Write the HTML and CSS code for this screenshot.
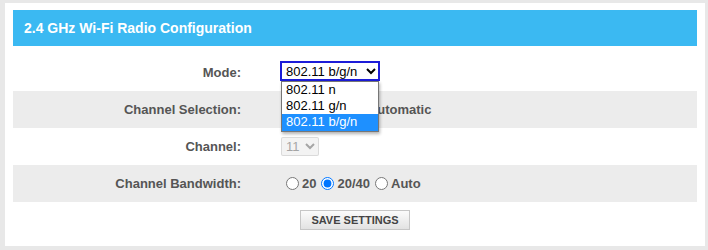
FILE: index.html
```html
<!DOCTYPE html>
<html lang="en">
<head>
  <meta charset="UTF-8" />
  <title>2.4 GHz Wi-Fi Radio Configuration</title>
  <link rel="stylesheet" href="styles.css">
</head>
<body>

  <div class="panel">
    <div class="panel-head">2.4 GHz Wi-Fi Radio Configuration</div>

    <form class="cfg-form">
      <div class="cfg-row">
        <label class="cfg-label" for="mode">Mode:</label>
        <div class="cfg-value">
          <div class="select-wrap">
            <select id="mode" class="mode-select">
              <option>802.11 n</option>
              <option>802.11 g/n</option>
              <option selected>802.11 b/g/n</option>
            </select>
            <ul class="select-popup">
              <li>802.11 n</li>
              <li>802.11 g/n</li>
              <li class="is-active">802.11 b/g/n</li>
            </ul>
          </div>
        </div>
      </div>

      <div class="cfg-row alt">
        <span class="cfg-label">Channel Selection:</span>
        <div class="cfg-value">
          <input type="radio" name="chsel" id="chManual"><label for="chManual">Manual</label><input type="radio" name="chsel" id="chAuto" checked><label for="chAuto">Automatic</label>
        </div>
      </div>

      <div class="cfg-row">
        <label class="cfg-label" for="channel">Channel:</label>
        <div class="cfg-value">
          <select id="channel" class="channel-select" disabled>
            <option>11</option>
          </select>
        </div>
      </div>

      <div class="cfg-row alt">
        <span class="cfg-label">Channel Bandwidth:</span>
        <div class="cfg-value">
          <input type="radio" name="bw" id="bw20"><label for="bw20">20</label><input type="radio" name="bw" id="bw40" checked><label for="bw40">20/40</label><input type="radio" name="bw" id="bwAuto"><label for="bwAuto">Auto</label>
        </div>
      </div>

      <div class="cfg-actions">
        <button type="button" class="save-btn">SAVE SETTINGS</button>
      </div>
    </form>
  </div>

</body>
</html>
```

FILE: styles.css
```css
html, body {
  margin: 0;
  padding: 0;
  background: #e8e8e8;
  font-family: "Liberation Sans", Arial, sans-serif;
}

.panel {
  margin: 3px 3px 0 5px;
  padding: 7px 8px 8px;
  background: #fff;
  height: 228px;
}

.panel-head {
  height: 36px;
  line-height: 36px;
  padding-left: 11px;
  background: #3bb9f2;
  color: #fff;
  font-size: 14px;
  font-weight: bold;
}

.cfg-form {
  margin: 8px 0 0;
}

.cfg-row {
  display: grid;
  grid-template-columns: 228px 1fr;
  column-gap: 40px;
  align-items: center;
  height: 37px;
  font-size: 13px;
  font-weight: bold;
  color: #555;
}
.cfg-row.alt {
  background: #ececec;
}

.cfg-label {
  text-align: right;
}

.cfg-value {
  display: flex;
  align-items: center;
}
.cfg-value input[type="radio"] {
  width: 13px;
  height: 13px;
  margin: 0 3px 0 5px;
}

.select-wrap {
  position: relative;
  z-index: 5;
  margin-bottom: 3px;
}

.mode-select {
  display: block;
  width: 100px;
  height: 20px;
  margin-left: -1px;
  font-family: "Liberation Sans", Arial, sans-serif;
  font-size: 13px;
  color: #000;
  background: #fff;
  border: 1px solid #1c1cd8;
  box-shadow: inset 0 0 0 1px #1c1cd8;
  border-radius: 0;
  padding: 0 1px;
  outline: none;
}

.select-popup {
  position: absolute;
  top: 20px;
  left: 0;
  width: 96px;
  margin: 0;
  padding: 0;
  list-style: none;
  background: #fff;
  border: 1px solid #767676;
  box-shadow: 1px 2px 3px rgba(0,0,0,0.3);
  font-size: 13px;
  font-weight: normal;
  color: #000;
}
.select-popup li {
  height: 16px;
  line-height: 16px;
  padding: 0 4px;
}
.select-popup li.is-active {
  height: 17px;
  background: #1e90ff;
  color: #fff;
}

.channel-select {
  width: 38px;
  height: 19px;
  font-family: "Liberation Sans", Arial, sans-serif;
  font-size: 13px;
  border-radius: 2px;
}

.cfg-actions {
  display: flex;
  padding: 8px 0 0 287px;
}

.save-btn {
  width: 110px;
  height: 20px;
  padding: 0;
  font-family: "Liberation Sans", Arial, sans-serif;
  font-size: 11px;
  font-weight: bold;
  color: #444;
  background: linear-gradient(to bottom, #fbfbfb, #e2e2e2);
  border: 1px solid #c6c6c6;
  border-radius: 0;
  cursor: pointer;
}
```
